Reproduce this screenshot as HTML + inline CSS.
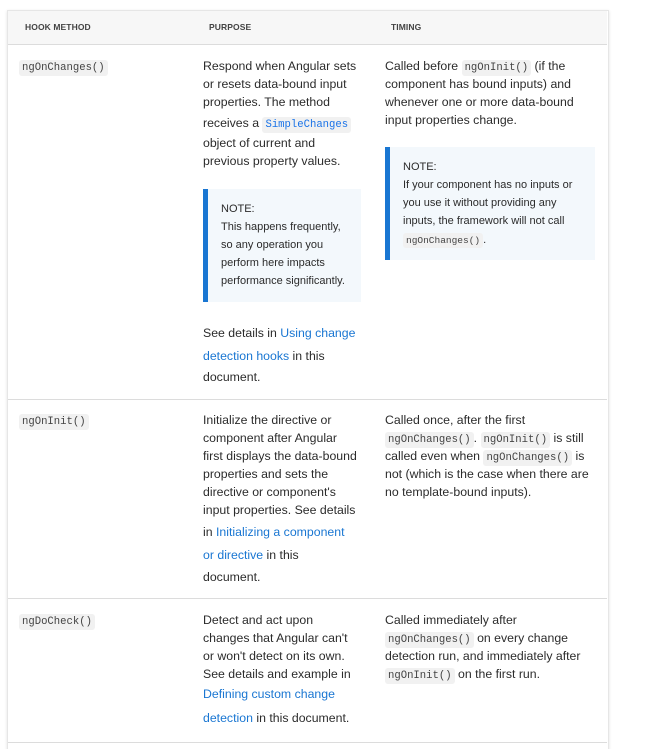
<!DOCTYPE html>
<html style="overflow:hidden;height:749px"><head><meta charset="utf-8"><style>
body{margin:0;background:#fff;width:672px;height:749px;position:relative;overflow:hidden;font-family:"Liberation Sans",sans-serif;color:#333;}
.t{position:absolute;left:7px;top:10px;width:600px;height:750px;border:1px solid #e6e6e6;box-shadow:0 1px 3px rgba(0,0,0,.12);}
.hd{position:absolute;left:8px;top:11px;width:599px;height:33px;background:#f7f7f7;border-bottom:1px solid #dcdcdc;}
.h{position:absolute;top:22px;font-size:8.5px;font-weight:bold;color:#444;letter-spacing:.1px}
.hr{position:absolute;left:8px;width:599px;height:1px;background:#dcdcdc}
.l{position:absolute;font-size:12.3px;line-height:18px;white-space:nowrap;color:#2b2b2b}
.s{font-size:11px}
code{font-family:"Liberation Mono",monospace;font-size:10.6px;background:#f1f1f1;color:#444;padding:2px 3px;border-radius:3px}
code.b{color:#1a73e8}
a{color:#1976d2;text-decoration:none}
.n{position:absolute;background:#f3f8fc;border-left:5px solid #1976d2}
</style></head><body>
<div class="t"></div>
<div class="hd"></div>
<div class="h" style="left:25px">HOOK METHOD</div>
<div class="h" style="left:209px">PURPOSE</div>
<div class="h" style="left:391px">TIMING</div>

<!-- row1 -->
<div class="l" style="left:19px;top:57px"><code>ngOnChanges()</code></div>
<div class="l" style="left:203px;top:57px">Respond when Angular sets</div>
<div class="l" style="left:203px;top:75px">or resets data-bound input</div>
<div class="l" style="left:203px;top:93px">properties. The method</div>
<div class="l" style="left:203px;top:114px">receives a <code class="b">SimpleChanges</code></div>
<div class="l" style="left:203px;top:134px">object of current and</div>
<div class="l" style="left:203px;top:152px">previous property values.</div>
<div class="n" style="left:203px;top:189px;width:153px;height:113px"></div>
<div class="l s" style="left:221px;top:200px">NOTE:</div>
<div class="l s" style="left:221px;top:218px">This happens frequently,</div>
<div class="l s" style="left:221px;top:236px">so any operation you</div>
<div class="l s" style="left:221px;top:254px">perform here impacts</div>
<div class="l s" style="left:221px;top:272px">performance significantly.</div>
<div class="l" style="left:203px;top:324px">See details in <a>Using change</a></div>
<div class="l" style="left:203px;top:347px"><a>detection hooks</a> in this</div>
<div class="l" style="left:203px;top:368px">document.</div>

<div class="l" style="left:385px;top:57px">Called before <code>ngOnInit()</code> (if the</div>
<div class="l" style="left:385px;top:75px">component has bound inputs) and</div>
<div class="l" style="left:385px;top:93px">whenever one or more data-bound</div>
<div class="l" style="left:385px;top:111px">input properties change.</div>
<div class="n" style="left:385px;top:147px;width:205px;height:113px"></div>
<div class="l s" style="left:403px;top:158px">NOTE:</div>
<div class="l s" style="left:403px;top:176px">If your component has no inputs or</div>
<div class="l s" style="left:403px;top:194px">you use it without providing any</div>
<div class="l s" style="left:403px;top:212px">inputs, the framework will not call</div>
<div class="l s" style="left:403px;top:231px"><code style="font-size:9.5px">ngOnChanges()</code>.</div>

<div class="hr" style="top:399px"></div>
<!-- row2 -->
<div class="l" style="left:19px;top:411px"><code>ngOnInit()</code></div>
<div class="l" style="left:203px;top:411px">Initialize the directive or</div>
<div class="l" style="left:203px;top:429px">component after Angular</div>
<div class="l" style="left:203px;top:447px">first displays the data-bound</div>
<div class="l" style="left:203px;top:465px">properties and sets the</div>
<div class="l" style="left:203px;top:483px">directive or component's</div>
<div class="l" style="left:203px;top:501px">input properties. See details</div>
<div class="l" style="left:203px;top:523px">in <a>Initializing a component</a></div>
<div class="l" style="left:203px;top:546px"><a>or directive</a> in this</div>
<div class="l" style="left:203px;top:568px">document.</div>

<div class="l" style="left:385px;top:411px">Called once, after the first</div>
<div class="l" style="left:385px;top:429px"><code>ngOnChanges()</code>. <code>ngOnInit()</code> is still</div>
<div class="l" style="left:385px;top:447px">called even when <code>ngOnChanges()</code> is</div>
<div class="l" style="left:385px;top:465px">not (which is the case when there are</div>
<div class="l" style="left:385px;top:483px">no template-bound inputs).</div>

<div class="hr" style="top:598px"></div>
<!-- row3 -->
<div class="l" style="left:19px;top:611px"><code>ngDoCheck()</code></div>
<div class="l" style="left:203px;top:611px">Detect and act upon</div>
<div class="l" style="left:203px;top:629px">changes that Angular can't</div>
<div class="l" style="left:203px;top:647px">or won't detect on its own.</div>
<div class="l" style="left:203px;top:665px">See details and example in</div>
<div class="l" style="left:203px;top:685px"><a>Defining custom change</a></div>
<div class="l" style="left:203px;top:709px"><a>detection</a> in this document.</div>

<div class="l" style="left:385px;top:611px">Called immediately after</div>
<div class="l" style="left:385px;top:629px"><code>ngOnChanges()</code> on every change</div>
<div class="l" style="left:385px;top:647px">detection run, and immediately after</div>
<div class="l" style="left:385px;top:665px"><code>ngOnInit()</code> on the first run.</div>

<div class="hr" style="top:742px"></div>
</body></html>
